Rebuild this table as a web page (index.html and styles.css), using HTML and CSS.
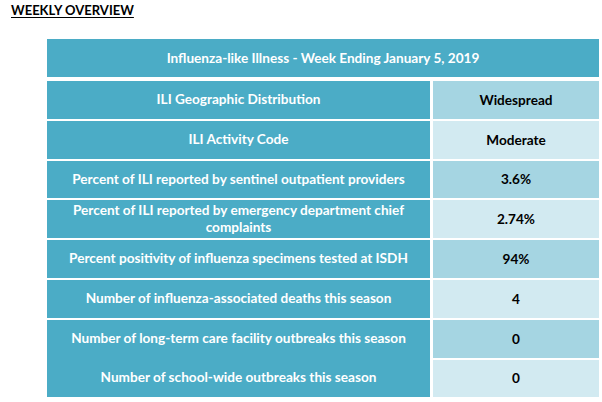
FILE: index.html
```html
<!DOCTYPE html>
<html>
<head>
<meta charset="utf-8">
<link rel="stylesheet" href="styles.css">
</head>
<body>
<h1 class="title">WEEKLY OVERVIEW</h1>
<div class="overview">
  <div class="head">Influenza-like Illness - Week Ending January 5, 2019</div>
  <div class="grid">
    <div class="label">ILI Geographic Distribution</div>
    <div class="value dark">Widespread</div>
    <div class="label">ILI Activity Code</div>
    <div class="value light">Moderate</div>
    <div class="label">Percent of ILI reported by sentinel outpatient providers</div>
    <div class="value dark">3.6%</div>
    <div class="label">Percent of ILI reported by emergency department chief<br>complaints</div>
    <div class="value light">2.74%</div>
    <div class="label">Percent positivity of influenza specimens tested at ISDH</div>
    <div class="value dark">94%</div>
    <div class="label">Number of influenza-associated deaths this season</div>
    <div class="value light">4</div>
    <div class="label-pair">
      <div class="half">Number of long-term care facility outbreaks this season</div>
      <div class="half">Number of school-wide outbreaks this season</div>
    </div>
    <div class="value dark">0</div>
    <div class="value light">0</div>
  </div>
</div>
</body>
</html>
```

FILE: styles.css
```css
html, body {
  margin: 0;
  padding: 0;
  background: #ffffff;
}
body {
  width: 602px;
  height: 402px;
  overflow: hidden;
  font-family: Lato, "Liberation Sans", sans-serif;
  font-weight: 700;
  font-size: 13.6px;
}
.title {
  margin: 2px 0 0 11px;
  font-size: 13px;
  font-weight: 700;
  color: #000;
  text-decoration: underline;
  text-underline-offset: 1.5px;
  line-height: 16px;
}
.overview {
  margin: 21px 0 0 47px;
  width: 552px;
}
.head {
  height: 38px;
  background: #4bacc6;
  color: #fff;
  display: flex;
  align-items: center;
  justify-content: center;
  margin-bottom: 4px;
}
.grid {
  display: grid;
  grid-template-columns: 383px 166px;
  grid-auto-rows: 37.8px;
  column-gap: 3px;
  row-gap: 2px;
}
.label, .half {
  background: #4bacc6;
  color: #fff;
  display: flex;
  align-items: center;
  justify-content: center;
  text-align: center;
  line-height: 17.7px;
}
.label-pair {
  grid-column: 1;
  grid-row: span 2;
  display: flex;
  flex-direction: column;
  background: #4bacc6;
}
.half {
  flex: 1;
}
.value {
  display: flex;
  align-items: center;
  justify-content: center;
  color: #000;
}
.label-pair + .value { grid-column: 2; }
.dark { background: #a5d5e2; }
.light { background: #d2eaf1; }
```
